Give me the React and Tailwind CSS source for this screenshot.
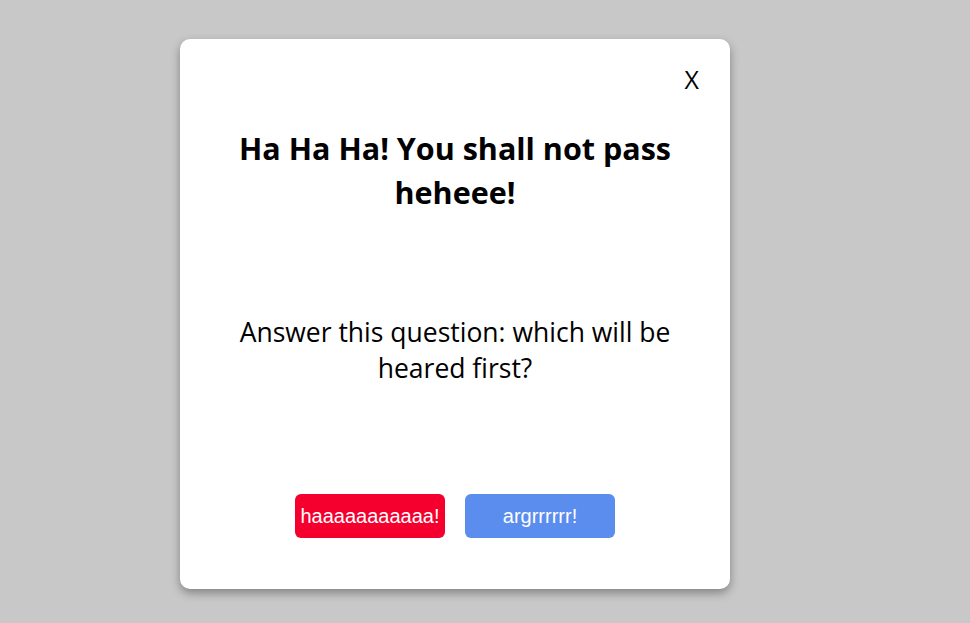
export default function App() {
  return (
    <div className="w-[970px] h-[623px] bg-[#c8c8c8] overflow-hidden">
      <div className="ml-[180px] pt-[39px]">
        <div className="w-[550px] h-[550px] bg-white rounded-[10px] shadow-[0_4px_10px_rgba(0,0,0,0.35)] flex flex-col items-center font-['Open_Sans',sans-serif] text-black">
          <div className="w-full flex justify-end pr-[31px] pt-[26px]">
            <span className="text-[25px] leading-[28px]">X</span>
          </div>
          <h1 className="mt-[33px] w-[460px] text-center font-bold text-[30.5px] leading-[44px]">
            Ha Ha Ha! You shall not pass heheee!
          </h1>
          <p className="mt-[100px] w-[460px] text-center text-[26.5px] leading-[36px]">
            Answer this question: which will be heared first?
          </p>
          <div className="mt-[108px] flex gap-[20px] font-['Liberation_Sans',Arial,sans-serif]">
            <button className="w-[150px] h-[44px] rounded-[6px] bg-[#f5002e] text-white text-[20px]">haaaaaaaaaaa!</button>
            <button className="w-[150px] h-[44px] rounded-[6px] bg-[#5b8def] text-white text-[20px]">argrrrrrr!</button>
          </div>
        </div>
      </div>
    </div>
  );
}
